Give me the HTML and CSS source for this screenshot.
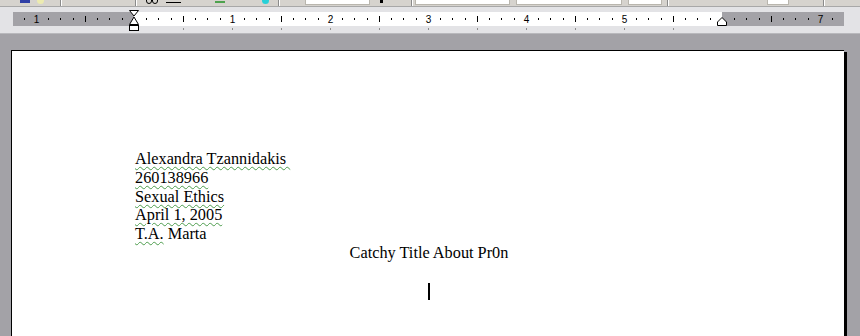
FILE: index.html
```html
<!DOCTYPE html>
<html lang="en">
<head>
  <meta charset="UTF-8">
  <meta name="viewport" content="width=device-width, initial-scale=1.0">
  <title>Document1 - Microsoft Word</title>
  <link rel="stylesheet" href="styles.css">
</head>
<body>

  <!-- bottom edge of the formatting toolbar -->
  <div class="toolbar">
    <span class="tb-blue"></span>
    <span class="tb-sun"></span>
    <span class="tb-sep s1"></span>
    <span class="tb-sep s2"></span>
    <span class="tb-ring r1"></span>
    <span class="tb-ring r2"></span>
    <span class="tb-line"></span>
    <span class="tb-green"></span>
    <span class="tb-cyan"></span>
    <span class="tb-sep s3"></span>
    <span class="tb-box b1"></span>
    <span class="tb-arrow"></span>
    <span class="tb-sep s4"></span>
    <span class="tb-box b2"></span>
    <span class="tb-box b3"></span>
    <span class="tb-box b4"></span>
    <span class="tb-sep s5"></span>
    <span class="tb-box b5"></span>
    <span class="tb-sep s6"></span>
  </div>

  <div class="ruler-area">
    <svg class="ruler" width="860" height="26" viewBox="0 0 860 26">
      <defs>
        <pattern id="ticks" x="134" y="0" width="98" height="26" patternUnits="userSpaceOnUse">
          <rect x="12" y="11" width="1" height="2" fill="#000"/>
          <rect x="24" y="11" width="1" height="2" fill="#000"/>
          <rect x="37" y="11" width="1" height="2" fill="#000"/>
          <rect x="49" y="9" width="1" height="6" fill="#000"/>
          <rect x="61" y="11" width="1" height="2" fill="#000"/>
          <rect x="73" y="11" width="1" height="2" fill="#000"/>
          <rect x="86" y="11" width="1" height="2" fill="#000"/>
        </pattern>
        <pattern id="tabs" x="183" y="0" width="49" height="26" patternUnits="userSpaceOnUse">
          <rect x="0" y="21" width="1" height="2" fill="#8c8c8c"/>
        </pattern>
      </defs>
      <!-- margins are grey, text area is white -->
      <rect x="13" y="5" width="121" height="14" fill="#a3a2a7"/>
      <rect x="134" y="5" width="588" height="14" fill="#fff"/>
      <rect x="722" y="5" width="122" height="14" fill="#a3a2a7"/>
      <rect x="13" y="5" width="831" height="14" fill="url(#ticks)"/>
      <rect x="183" y="19" width="491" height="5" fill="url(#tabs)"/>
      <g class="nums" font-family="Liberation Sans, Arial, sans-serif" font-size="10" text-anchor="middle">
        <text x="36.5" y="16">1</text>
        <text x="232.5" y="16">1</text>
        <text x="330.5" y="16">2</text>
        <text x="428.5" y="16">3</text>
        <text x="526.5" y="16">4</text>
        <text x="624.5" y="16">5</text>
        <text x="820.5" y="16">7</text>
      </g>
      <!-- left indent markers -->
      <path d="M129.5 3.5 H138.5 L134 9 Z" fill="#fff" stroke="#000"/>
      <path d="M134 10 L138.5 17.5 H129.5 Z" fill="#fff" stroke="#000"/>
      <rect x="129.5" y="18.5" width="9" height="5" fill="#fff" stroke="#000"/>
      <!-- right indent marker -->
      <path d="M717.5 18.5 V15 L722 10.5 L726.5 15 V18.5 Z" fill="#fff" stroke="#000"/>
    </svg>
  </div>

  <div class="workspace">
    <div class="page">
      <div class="header-block">
        <p class="line"><span class="grammar">Alexandra Tzannidakis </span></p>
        <p class="line"><span class="grammar">260138966</span></p>
        <p class="line"><span class="grammar">Sexual Ethics</span></p>
        <p class="line"><span class="grammar">April 1, 2005</span></p>
        <p class="line"><span class="grammar">T.A.</span> Marta</p>
      </div>
      <p class="line title">Catchy Title About Pr0n</p>
      <p class="line blank">&nbsp;</p>
      <p class="line title"><span class="caret"></span></p>
    </div>
  </div>

</body>
</html>
```

FILE: styles.css
```css
body {
  margin: 0;
  padding: 0;
  width: 860px;
  height: 336px;
  overflow: hidden;
  background-color: #a3a2a7;
  font-family: "Liberation Sans", Arial, sans-serif;
}
.toolbar {
  display: flex;
  align-items: flex-start;
  height: 6px;
  background-color: #d6d3ce;
  border-bottom: 1px solid #a8a8a8;
  overflow: hidden;
}
.toolbar span {
  display: block;
  flex: none;
}
.tb-blue {
  width: 10px;
  height: 3px;
  margin-left: 20px;
  background-color: #2f3fa6;
}
.tb-sun {
  width: 7px;
  height: 4px;
  margin-left: 7px;
  border-radius: 0 0 4px 4px;
  background-color: #ecebb0;
}
.tb-sep {
  width: 1px;
  height: 6px;
  background-color: #8a8a8a;
  border-right: 1px solid #fff;
}
.s1 { margin-left: 16px; }
.s2 { margin-left: 73px; }
.tb-ring {
  width: 4px;
  height: 3px;
  margin-top: -1px;
  border: 1px solid #000;
  border-radius: 0 0 3px 3px;
}
.r1 { margin-left: 9px; }
.r2 { margin-left: 0; }
.tb-line {
  width: 15px;
  height: 1px;
  margin-top: 2px;
  margin-left: 8px;
  background-color: #000;
}
.tb-green {
  width: 10px;
  height: 2px;
  margin-left: 34px;
  margin-top: 1px;
  background-color: #4ea24e;
}
.tb-cyan {
  width: 7px;
  height: 4px;
  margin-left: 37px;
  border-radius: 0 0 4px 4px;
  background-color: #27d0d8;
}
.s3 { margin-left: 9px; }
.tb-box {
  height: 4px;
  background-color: #fff;
  border: 1px solid #b9b6ae;
  border-top: none;
}
.b1 { width: 63px; margin-left: 25px; }
.tb-arrow {
  width: 3px;
  height: 3px;
  margin-left: 10px;
  background-color: #000;
}
.s4 { margin-left: 28px; }
.b2 { width: 93px; margin-left: 2px; }
.b3 { width: 104px; margin-left: 6px; }
.b4 { width: 32px; margin-left: 6px; }
.s5 { margin-left: 5px; }
.b5 { width: 20px; margin-left: 98px; }
.s6 { margin-left: 34px; }
.ruler-area {
  height: 20px;
  padding-top: 6px;
  background-color: #e3e3e6;
  border-bottom: 1px solid #b8b8bc;
}
.ruler {
  display: block;
  margin-top: -6px;
}
.workspace {
  padding: 16px 0 0 11px;
}
.page {
  width: 833px;
  height: 300px;
  padding: 99px 0 0 123px;
  box-sizing: border-box;
  background-color: #fff;
  border-left: 1px solid #000;
  border-top: 1px solid #000;
  box-shadow: 3px 2px 0 #000;
  font-family: "Liberation Serif", "Times New Roman", serif;
  font-size: 16.3px;
  color: #000;
}
.line {
  margin: 0;
  height: 18.8px;
  line-height: 18.8px;
  white-space: pre;
}
.title {
  width: 588px;
  text-align: center;
}
.grammar {
  text-decoration: underline wavy #4c9c4c;
  text-decoration-thickness: 1px;
  text-underline-offset: 2px;
}
.caret {
  display: inline-block;
  width: 2px;
  height: 17px;
  vertical-align: -4px;
  background-color: #000;
}
```
